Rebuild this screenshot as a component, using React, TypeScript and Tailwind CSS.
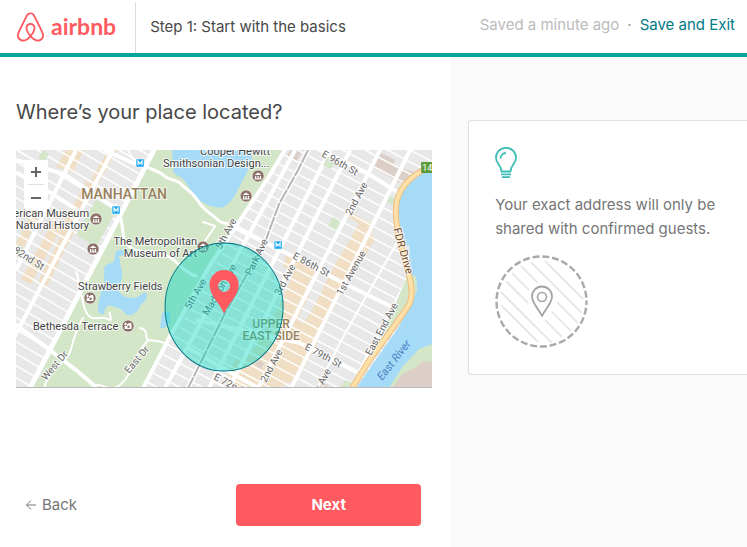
import { SiAirbnb } from "react-icons/si";

type Line = [number, number, number, number];

const eastStreets: Line[] = Array.from({ length: 40 }, (_, i) => {
  const y = -30 + i * 12;
  return [140, y, 440, y + 160];
});
const westStreets: Line[] = Array.from({ length: 34 }, (_, i) => {
  const y = 50 + i * 12;
  return [10, y, 160, y + 88];
});

const eastAvenues: Line[] = [
  [295, 150, 165, 388],
  [330, 150, 209, 388],
  [350, 150, 229, 388],
  [380, 150, 258, 388],
  [410, 150, 291, 388],
];

type MapLabel = { t: string; x: number; y: number; r?: number; a?: "start" | "middle" | "end" };

const places: MapLabel[] = [
  { t: "Cooper Hewitt", x: 235, y: 155, a: "middle" },
  { t: "Smithsonian Design...", x: 163, y: 167 },
  { t: "American Museum", x: 89, y: 217, a: "end" },
  { t: "of Natural History", x: 89, y: 229, a: "end" },
  { t: "The Metropolitan", x: 197, y: 245, a: "end" },
  { t: "Museum of Art", x: 197, y: 257, a: "end" },
  { t: "Strawberry Fields", x: 78, y: 290 },
  { t: "Bethesda Terrace", x: 33, y: 330 },
];

const roads: MapLabel[] = [
  { t: "E 96th St", x: 321, y: 156, r: 30 },
  { t: "2nd Ave", x: 351, y: 216, r: -62 },
  { t: "E 86th St", x: 292, y: 258, r: 28 },
  { t: "1st Avenue", x: 342, y: 296, r: -61 },
  { t: "E 79th St", x: 304, y: 349, r: 28 },
  { t: "East End Ave", x: 371, y: 356, r: -62 },
  { t: "2nd Ave", x: 266, y: 383, r: -62 },
  { t: "York Ave", x: 313, y: 405, r: -62 },
  { t: "3rd Ave", x: 280, y: 296, r: -62 },
  { t: "5th Ave", x: 221, y: 250, r: -62 },
  { t: "Park Ave", x: 251, y: 276, r: -64 },
  { t: "5th Ave", x: 190, y: 310, r: -60 },
  { t: "Madison Ave", x: 208, y: 316, r: -60 },
  { t: "E 72nd St", x: 213, y: 379, r: 28 },
  { t: "W 82nd St", x: 3, y: 246, r: 32 },
  { t: "West Dr", x: 46, y: 381, r: -50 },
  { t: "East Dr", x: 129, y: 374, r: -50 },
];

const museums = [
  [258, 176],
  [246, 196],
  [96, 219],
  [93, 249],
  [203, 247],
];
const sights = [
  [90, 298],
  [128, 326],
];
const metros = [
  [140, 163],
  [116, 210],
  [278, 245],
];

function CityMap() {
  return (
    <svg
      viewBox="16 150 416 238"
      className="block w-full font-['Roboto',sans-serif]"
      role="img"
      aria-label="Map of the Upper East Side, Manhattan"
    >
      <defs>
        <clipPath id="east">
          <path d="M284 148H432V388H143Z" />
        </clipPath>
        <clipPath id="west">
          <path d="M16 148H153L30 388H16Z" />
        </clipPath>
      </defs>
      <rect x="16" y="150" width="416" height="238" fill="#e8e8e8" />

      {/* shopping blocks */}
      <g fill="#f0dfc4">
        <path d="M66 150h18l-11 22-17-5zM108 150h9l-18 33-8-3zM86 181l9 4-28 53-9-4zM54 220l9 4-32 60-10-5zM44 190l6 3-26 54-8-4zM68 222l9 4-30 60-9-4z" />
        <path d="M349 211l14 8 12 6-4 9 4 5-17 30-4-2-4 10-11 20-7 15-12 20-4 14-18 32-20 10h-6l20-44 22-38 20-40 25-42-14-10z" />
        <path d="M286 252l26 12 3 8-10 18 4 6-12 24 10 6-14 30-6-2-4 10-12 24h-36l10-24 34-58 14-32-10-8z" />
        <path d="M225 380l10-20 30-14-4 42h-32z" />
      </g>
      <g fill="#dccfc7">
        <path d="M379 152l16 8-2 5 21 7-12 12-29-17z" />
        <path d="M290 150h12l-5 11-10-5z" />
        <path d="M258 360l6 3-3 6-6-4z" />
        <path d="M322 382l6 3-2 3h-6z" />
      </g>

      <g clipPath="url(#east)" stroke="#fff" fill="none">
        {eastStreets.map(([a, b, c, d]) => (
          <line key={b} x1={a} y1={b} x2={c} y2={d} strokeWidth="1.5" />
        ))}
      </g>
      <g clipPath="url(#west)" stroke="#fff" fill="none">
        {westStreets.map(([a, b, c, d]) => (
          <line key={b} x1={a} y1={b} x2={c} y2={d} strokeWidth="1.5" />
        ))}
        <path d="M76 150L16 270M113 150L10 345M16 160l48 14 54 36M16 172l30 18 44 28M16 325l60 44M104 150l36 16" strokeWidth="4" />
      </g>
      <g stroke="#fff" fill="none" strokeWidth="4">
        {eastAvenues.map(([a, b, c, d]) => (
          <line key={a} x1={a} y1={b} x2={c} y2={d} />
        ))}
        <path d="M400 237L343 337 317 388M408 277L358 373" strokeWidth="2" />
        <path d="M314 147L367 173 397 192M215 218L300 260 343 283 390 306M196 320L300 343 357 372M188 348L240 378 262 390" strokeWidth="4" />
      </g>

      {/* Central Park */}
      <path d="M153 148H286L268 176 210 265 168 340 142 388H30Z" fill="#d3e6c8" />
      <path d="M96 200l20 11-20 36-20-12z" fill="#d3e6c8" />
      <g fill="#d3e6c8">
        <path d="M327 157l8 4-4 8-8-4zM333 217l7 4-4 9-8-4zM389 196l6 3-2 6-6-3zM345 380l8 3-3 5h-10zM406 279l10 2 1 12-7 15-20 27-7-3z" />
        <path d="M43 150l6 4-5 8-6-4zM18 245l5 3-4 8-3-2z" />
      </g>
      <g fill="#a5dbf7">
        <path d="M172 150l1 20c1 6 7 5 11 10l9 13c4 7 12 12 22 14 9 3 15-4 20-12l15-29 3-16z" />
        <path d="M116 251l10-2-1 6-6 1 2 12c3 8 0 13-3 20 1 8 9 10 17 10 5-1 7-7 12-5 0 5-1 9-6 11-2 8-9 12-14 11-3-3-6-7-12-8-6-3-10-2-11 7-5 1-6-2-6-8 2-11 4-16 6-23 1-6-1-11 1-17 3-3 7-2 9-5z" />
        <path d="M162 313l8-2v10l-5 7h-5z" />
      </g>
      <g stroke="#fff" fill="none" strokeLinecap="round">
        <path d="M155 148L30 388" strokeWidth="5" />
        <path d="M141 161c7 10 16 8 22 14s14 4 18 9 11 7 17 17 14 13 20 19 14 2 22 8M116 205l5 14c3 14 0 22 10 29s20 1 33 6 18 18 32 22" strokeWidth="3" />
        <path d="M16 325l26 19 34 26 20 17" strokeWidth="4" />
        <path d="M128 150c4 9 8 12 13 14M76 272c4 6 1 11 4 18s2 18 8 25 13 0 20 4-1-8 2-6M83 318c-8 12-9 22-13 34s-20 14-26 36M140 328c10 2 4 11 8 12s10-1 21 5M148 340c-8 10-14 18-16 26s-10 21-19 22-12-6-20-2M203 222l12 4-16 24" strokeWidth="2" />
      </g>
      <path d="M286 148L268 178 210 265 168 340 143 388" stroke="#fff" fill="none" strokeWidth="4" />

      {/* Park Avenue railway */}
      <path d="M308 150L298 170 279 204 265 242 225 313 188 388" stroke="#fff" fill="none" strokeWidth="5" />
      <path d="M308 150L298 170 279 204 265 242 225 313 188 388" stroke="#b5b5b5" fill="none" strokeWidth="2" strokeDasharray="14 1" />

      {/* East River */}
      <path d="M432 166L418 174 403 190 398 205 400 226 409 256 412 280 413 300 398 328 356 388H432Z" fill="#a5dbf7" />
      <path d="M411 276h5l1 14-5 12z" fill="#d3e6c8" />
      <path d="M432 344l-13 5-17 18-13 21h43z" fill="#d3e6c8" />
      <path d="M432 362l-10-1-6 6-14 7-10 14h40z" fill="#dccfc7" />
      <path d="M405 246l4-1 1 9-4 2z" fill="#e8e8e8" />
      <path d="M432 166C416 172 401 184 397 200S399 240 406 264 413 298 408 306 380 345 368 362L352 388" fill="none" stroke="#eabf80" strokeWidth="6" />
      <path d="M432 166C416 172 401 184 397 200S399 240 406 264 413 298 408 306 380 345 368 362L352 388" fill="none" stroke="#ffe0a8" strokeWidth="4" />

      {/* road names */}
      <g fontSize="10" fill="#666" stroke="#fff" strokeWidth="2" strokeOpacity="0.8" paintOrder="stroke">
        {roads.map((l) => (
          <text key={l.t + l.x} x={l.x} y={l.y} transform={`rotate(${l.r} ${l.x} ${l.y})`}>
            {l.t}
          </text>
        ))}
        <text x="393" y="229" fontSize="11" fill="#6b4a2a" transform="rotate(74 393 229)">FDR Drive</text>
        <text x="382" y="381" fontSize="11" fontStyle="italic" fill="#4a7fc4" stroke="none" transform="rotate(-52 382 381)">
          East River
        </text>
      </g>

      {/* place names */}
      <g fontSize="11" fill="#444" stroke="#fff" strokeWidth="2" strokeOpacity="0.8" paintOrder="stroke">
        {places.map((l) => (
          <text key={l.t} x={l.x} y={l.y} textAnchor={l.a}>
            {l.t}
          </text>
        ))}
      </g>
      <g fill="#97805c" stroke="#fff" strokeWidth="2" strokeOpacity="0.7" paintOrder="stroke" fontWeight="500" textAnchor="middle">
        <text x="124" y="199" fontSize="14">MANHATTAN</text>
        <text x="271" y="328" fontSize="12">UPPER</text>
        <text x="271" y="340" fontSize="12">EAST SIDE</text>
      </g>

      {museums.map(([x, y]) => (
        <g key={`${x}-${y}`} transform={`translate(${x} ${y})`}>
          <circle r="6" fill="#8b6f66" stroke="#fff" strokeWidth="0.6" />
          <path d="M-3.5-1L0-3.5 3.5-1ZM-3 0h1.2v2.5H-3zM-.6 0H.6v2.5H-.6zM1.8 0H3v2.5H1.8zM-3.5 2.5h7v1h-7z" fill="#fff" />
        </g>
      ))}
      {sights.map(([x, y]) => (
        <g key={`${x}-${y}`} transform={`translate(${x} ${y})`}>
          <circle r="6" fill="#8b6f66" stroke="#fff" strokeWidth="0.6" />
          <path d="M-1-2h1l.7-1h2.2l.6 1v5h-7V0H-1z" fill="#fff" />
          <path d="M-4-2h3M-2.500-3.500v3" stroke="#fff" />
          <circle cx="0.500" cy="0.700" r="1.200" fill="#8b6f66" />
        </g>
      ))}
      {metros.map(([x, y]) => (
        <g key={`${x}-${y}`} transform={`translate(${x} ${y})`}>
          <rect x="-4" y="-4" width="8" height="8" fill="#14a5f0" stroke="#fff" strokeWidth="0.5" />
          <path d="M-2 2.2V-2L0 .8 2-2v4.2" fill="none" stroke="#fff" strokeWidth="1.1" />
        </g>
      ))}
      <rect x="421" y="162" width="14" height="11" fill="#5d9b3b" />
      <text x="422" y="171" fontSize="9" fill="#fff">14</text>

      {/* approximate area */}
      <ellipse cx="224" cy="307" rx="59" ry="64" fill="#00d6be" fillOpacity="0.42" stroke="#007a87" strokeWidth="1" />
      <path
        d="M224 314C221 304 209.500 297 209.500 284.500a14.500 14.500 0 0 1 29 0C238.500 297 227 304 224 314ZM224 280a6 6 0 1 0 0 12 6 6 0 0 0 0-12Z"
        fill="#ff5a5f"
        fillRule="evenodd"
      />
      <path d="M16 387.500H432" stroke="#b8b8b8" />
    </svg>
  );
}

function Bulb() {
  return (
    <svg width="22" height="32" viewBox="0 0 22 32" fill="none" stroke="#3cbdb5" strokeWidth="1.800" aria-hidden="true">
      <path d="M6.500 24.500C6.500 18 1 17 1 10.800A10 10 0 0 1 21 10.800C21 17 15.500 18 15.500 24.500Z" strokeLinejoin="round" />
      <path d="M5.500 11.500A5.500 5.500 0 0 1 11 6M6 27.300h10M7 30.200h8" />
    </svg>
  );
}

function HiddenAddress() {
  return (
    <svg width="94" height="94" viewBox="0 0 94 94" fill="none" aria-hidden="true">
      <g stroke="#e2e2e2" strokeWidth="1.600">
        <path d="M50 6L88 44M36 7L87 58M26 11L43 28M62 47L83 68M17 18L34 35M57 57L76 76M11 26L33 48M50 65L67 82M6 37L57 88M6 50L43 87" />
      </g>
      <circle cx="46.500" cy="46.500" r="45" stroke="#a9a9a9" strokeWidth="2.400" strokeDasharray="7 2.820" strokeDashoffset="3.500" />
      <path d="M47 61C44 54 37 48.500 37 41.500a10 10 0 0 1 20 0C57 48.500 50 54 47 61Z" fill="#fff" stroke="#a3a3a3" strokeWidth="1.800" strokeLinejoin="round" />
      <circle cx="47" cy="42" r="4.500" stroke="#a3a3a3" strokeWidth="1.600" />
    </svg>
  );
}

export default function App() {
  return (
    <div className="flex min-h-screen flex-col bg-white font-['Lato',sans-serif] text-[#484848]">
      <header className="flex h-[57px] shrink-0 justify-between border-b-4 border-[#00a69b] pr-3 pl-4">
        <div className="flex">
          <a href="#" aria-label="airbnb home" className="flex items-center gap-[6px] pr-[19px] text-[#ff5a5f]">
            <SiAirbnb className="h-8 w-[29px]" aria-hidden="true" />
            <span className="pb-[2px] text-[23px] leading-8 font-bold">airbnb</span>
          </a>
          <div className="mt-[2px] flex items-center border-l border-[#dcdcdc] pb-[2px] pl-[14px]">
            <h2 className="font-['Inter',sans-serif] text-[15px] leading-6">Step 1: Start with the basics</h2>
          </div>
        </div>
        <div className="flex items-center gap-2 pb-1 font-['Inter',sans-serif] text-[15px] leading-6">
          <span className="text-[#bbbbbb]">Saved a minute ago</span>
          <span className="text-[#999999]">·</span>
          <a href="#" className="text-[#007a87]">Save and Exit</a>
        </div>
      </header>

      <div className="grid grow grid-cols-[61fr_40fr]">
        <main className="flex flex-col justify-between pt-10 pr-[19px] pb-[21px] pl-4">
          <div>
            <h1 className="font-['Inter',sans-serif] text-xl leading-[30px]">Where’s your place located?</h1>
            <div className="relative mt-[23px]">
              <CityMap />
              <div className="absolute top-[10px] left-2 flex w-6 flex-col items-center divide-y divide-[#e0e0e0] rounded-[2px] bg-white">
                <button type="button" aria-label="Zoom in" className="flex h-[25px] w-4 items-center justify-center">
                  <svg width="10" height="10" viewBox="0 0 10 10" stroke="#666" strokeWidth="2" aria-hidden="true">
                    <path d="M0 5h10M5 0v10" />
                  </svg>
                </button>
                <button type="button" aria-label="Zoom out" className="flex h-[25px] w-4 items-center justify-center">
                  <svg width="10" height="10" viewBox="0 0 10 10" stroke="#666" strokeWidth="2" aria-hidden="true">
                    <path d="M0 5h10" />
                  </svg>
                </button>
              </div>
            </div>
          </div>
          <div className="flex items-center justify-between pr-[11px] pl-[10px] font-['Inter',sans-serif]">
            <button type="button" className="flex items-center gap-[6px] text-[15px] leading-6 text-[#767676]">
              <svg width="10" height="10" viewBox="0 0 10 10" fill="none" stroke="currentColor" aria-hidden="true">
                <path d="M10 5H.5M5 .5L.5 5 5 9.500" />
              </svg>
              Back
            </button>
            <button type="button" className="h-[42px] w-[185px] rounded-[4px] bg-[#ff5a5f] text-[15px] leading-6 font-bold text-white">
              Next
            </button>
          </div>
        </main>

        <aside className="bg-[#fafafa] pt-[63px] pl-[17px]">
          <div className="rounded-l-[4px] border border-r-0 border-[#dce0e0] bg-white px-[26px] pt-[26px] pb-[25px]">
            <Bulb />
            <p className="mt-[14px] font-['Inter',sans-serif] text-[15px] leading-6 text-[#767676]">
              Your exact address will only be shared with confirmed guests.
            </p>
            <div className="mt-[14px]">
              <HiddenAddress />
            </div>
          </div>
        </aside>
      </div>
    </div>
  );
}
